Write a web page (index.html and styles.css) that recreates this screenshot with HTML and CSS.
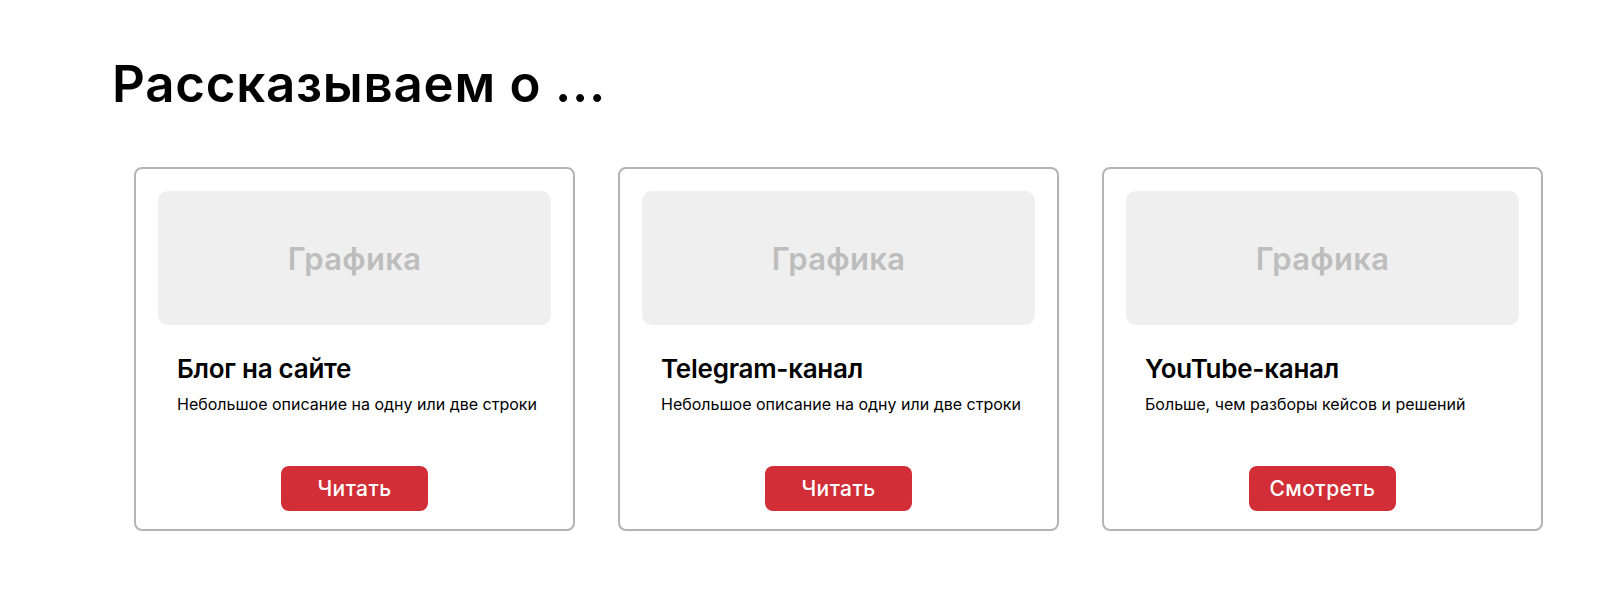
FILE: index.html
```html
<!DOCTYPE html>
<html lang="ru">
<head>
<meta charset="utf-8">
<title>Рассказываем о ...</title>
<link rel="stylesheet" href="styles.css">
</head>
<body>
<section class="section">
  <h1 class="section-title">Рассказываем о ...</h1>
  <div class="cards">
    <article class="card">
      <div class="card-graphic">Графика</div>
      <div class="card-body">
        <h2 class="card-title">Блог на сайте</h2>
        <p class="card-text">Небольшое описание на одну или две строки</p>
      </div>
      <a class="card-button" href="#">Читать</a>
    </article>
    <article class="card">
      <div class="card-graphic">Графика</div>
      <div class="card-body">
        <h2 class="card-title">Telegram-канал</h2>
        <p class="card-text">Небольшое описание на одну или две строки</p>
      </div>
      <a class="card-button" href="#">Читать</a>
    </article>
    <article class="card">
      <div class="card-graphic">Графика</div>
      <div class="card-body">
        <h2 class="card-title">YouTube-канал</h2>
        <p class="card-text">Больше, чем разборы кейсов и решений</p>
      </div>
      <a class="card-button" href="#">Смотреть</a>
    </article>
  </div>
</section>
</body>
</html>
```

FILE: styles.css
```css
* {
  box-sizing: border-box;
}

html, body {
  margin: 0;
  padding: 0;
  background: #ffffff;
}

body {
  font-family: Inter, "Noto Sans", "Liberation Sans", sans-serif;
  color: #000000;
}

.section {
  padding: 54px 0 0 112px;
}

.section-title {
  margin: 0;
  font-size: 51px;
  line-height: 60px;
  font-weight: 600;
  letter-spacing: 0.015em;
}

.cards {
  display: flex;
  gap: 43px;
  margin-top: 53px;
  margin-left: 22px;
}

.card {
  width: 441px;
  height: 364px;
  border: 2px solid #b4b4b4;
  border-radius: 8px;
  padding: 22px 22px 18px;
  display: flex;
  flex-direction: column;
}

.card-graphic {
  height: 134px;
  border-radius: 10px;
  background: #efefef;
  color: #bdbdbd;
  font-size: 31px;
  font-weight: 600;
  letter-spacing: 0.01em;
  display: flex;
  align-items: center;
  justify-content: center;
}

.card-body {
  padding: 0 0 0 19px;
  margin-top: 28px;
}

.card-title {
  margin: 0;
  font-size: 26px;
  line-height: 32px;
  font-weight: 600;
  letter-spacing: -0.01em;
}

.card-text {
  margin: 9px 0 0;
  font-size: 16px;
  line-height: 20px;
  font-weight: 400;
  white-space: nowrap;
}

.card-button {
  margin-top: auto;
  align-self: center;
  width: 147px;
  height: 45px;
  border-radius: 8px;
  background: #d12e37;
  color: #ffffff;
  font-size: 21px;
  font-weight: 500;
  letter-spacing: 0.02em;
  text-decoration: none;
  display: flex;
  align-items: center;
  justify-content: center;
}
```
